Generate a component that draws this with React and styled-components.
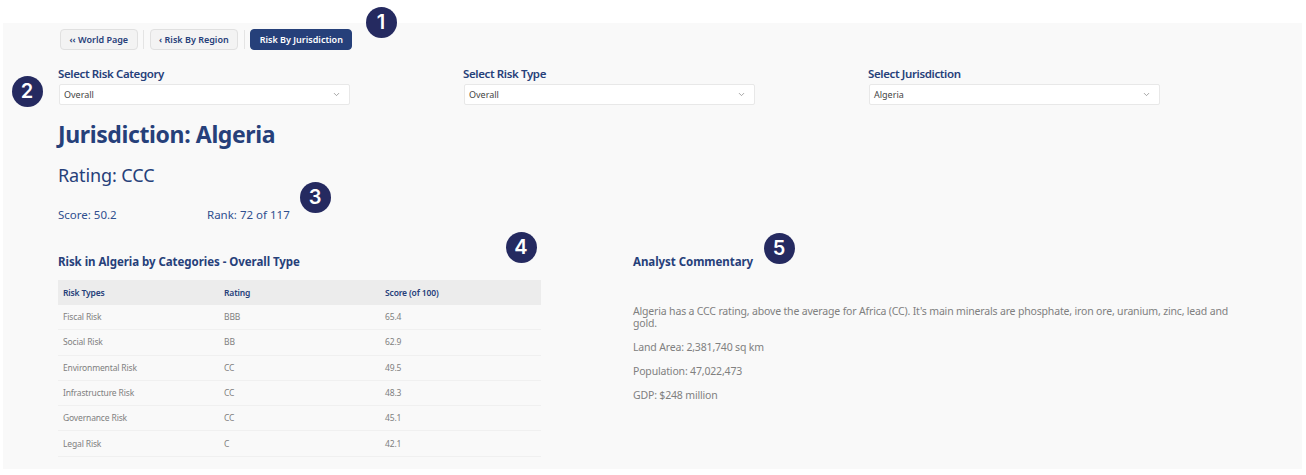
import React from 'react'
import styled, { createGlobalStyle } from 'styled-components'
import { ChevronDown } from 'lucide-react'

const navy = '#26407a'

const GlobalStyle = createGlobalStyle`
html, body {
  margin: 0;
  padding: 0;
  background: #fff;
  font-family: "Noto Sans", "Open Sans", sans-serif;
}
`
const Page = styled.div`
position: relative;
width: 1306px;
height: 475px;
overflow: hidden;
padding: 23px 4px 6px 3px;
box-sizing: border-box;
`
const Panel = styled.div`
height: 100%;
background: #f9f9f9;
padding: 6px 0 0 55px;
box-sizing: border-box;
`
const Nav = styled.div`
display: flex;
align-items: center;
padding-left: 2px;
height: 21px;
`
const NavButton = styled.div`
height: 21px;
box-sizing: border-box;
padding: 0 8.5px;
display: flex;
align-items: center;
border-radius: 4px;
font-size: 9px;
font-weight: 600;
color: ${props => props.$active ? '#fff' : navy};
background: ${props => props.$active ? navy : '#f3f3f3'};
border: 1px solid ${props => props.$active ? navy : '#e0e0e0'};
`
const Divider = styled.div`
width: 1px;
height: 19px;
margin: 0 5.5px;
background: #e4e4e4;
`
const Filters = styled.div`
display: grid;
grid-template-columns: repeat(3, 405px);
margin-top: 16px;
`
const FilterLabel = styled.div`
font-size: 11.5px;
font-weight: 600;
line-height: 16px;
letter-spacing: -0.38px;
color: ${navy};
`
const Select = styled.div`
width: 291px;
height: 21px;
margin: 2px 0 0 1px;
box-sizing: border-box;
padding: 0 8px 0 4px;
display: flex;
align-items: center;
justify-content: space-between;
background: #fff;
border: 1px solid #e8e8e8;
border-radius: 2px;
font-size: 9px;
color: #444;
svg {
  color: #888;
}
`
const Title = styled.h1`
margin: 15px 0 0;
font-size: 23px;
line-height: 28px;
font-weight: 700;
letter-spacing: -0.38px;
color: ${navy};
`
const Rating = styled.h2`
margin: 15px 0 0;
font-size: 18px;
line-height: 24px;
font-weight: 400;
letter-spacing: -0.1px;
color: ${navy};
`
const Stats = styled.div`
display: flex;
margin-top: 20px;
font-size: 11.5px;
line-height: 16px;
color: #2f4f8f;
`
const Stat = styled.div`
width: 149px;
`
const Columns = styled.div`
display: flex;
margin-top: 31px;
`
const TableSection = styled.section`
width: 483px;
margin-right: 92px;
`
const CommentarySection = styled.section`
width: 600px;
`
const SectionTitle = styled.h3`
margin: 0;
font-size: 11.5px;
line-height: 16px;
font-weight: 700;
letter-spacing: -0.05px;
color: ${navy};
`
const Table = styled.table`
width: 483px;
margin-top: 10px;
border-collapse: collapse;
table-layout: fixed;
font-size: 8.5px;
letter-spacing: -0.15px;
`
const Th = styled.th`
height: 25px;
padding: 0 5px;
text-align: left;
font-weight: 600;
color: ${navy};
background: #ececec;
`
const Td = styled.td`
height: 23.3px;
padding: 0 5px 1px;
color: #808080;
border-bottom: 1px solid #f0f0f0;
`
const Commentary = styled.div`
margin-top: 35px;
font-size: 10.5px;
line-height: 12px;
letter-spacing: -0.17px;
color: #808080;
p {
  margin: 0 0 12px;
}
`
const Badge = styled.div`
position: absolute;
left: ${props => props.$x - 15.5}px;
top: ${props => props.$y - 15.5}px;
width: 31px;
height: 31px;
border-radius: 50%;
background: #252a60;
color: #fff;
display: flex;
align-items: center;
justify-content: center;
font-family: Inter, sans-serif;
font-size: 20px;
font-weight: 600;
`

const filters = [
  ['Select Risk Category', 'Overall'],
  ['Select Risk Type', 'Overall'],
  ['Select Jurisdiction', 'Algeria'],
]

const rows = [
  ['Fiscal Risk', 'BBB', '65.4'],
  ['Social Risk', 'BB', '62.9'],
  ['Environmental Risk', 'CC', '49.5'],
  ['Infrastructure Risk', 'CC', '48.3'],
  ['Governance Risk', 'CC', '45.1'],
  ['Legal Risk', 'C', '42.1'],
]

const badges = [
  [1, 381, 22],
  [2, 27, 91],
  [3, 315, 197],
  [4, 521, 247],
  [5, 779, 248],
]

const App = () => {
  return (
    <Page>
      <GlobalStyle />
      <Panel>
        <Nav>
          <NavButton>‹‹ World Page</NavButton>
          <Divider />
          <NavButton>‹ Risk By Region</NavButton>
          <Divider />
          <NavButton $active>Risk By Jurisdiction</NavButton>
        </Nav>
        <Filters>
          {filters.map(([label, value]) => (
            <div key={label}>
              <FilterLabel>{label}</FilterLabel>
              <Select>
                {value}
                <ChevronDown size={9} />
              </Select>
            </div>
          ))}
        </Filters>
        <Title>Jurisdiction: Algeria</Title>
        <Rating>Rating: CCC</Rating>
        <Stats>
          <Stat>Score: 50.2</Stat>
          <Stat>Rank: 72 of 117</Stat>
        </Stats>
        <Columns>
          <TableSection>
            <SectionTitle>Risk in Algeria by Categories - Overall Type</SectionTitle>
            <Table>
              <thead>
                <tr>
                  <Th>Risk Types</Th>
                  <Th>Rating</Th>
                  <Th>Score (of 100)</Th>
                </tr>
              </thead>
              <tbody>
                {rows.map(row => (
                  <tr key={row[0]}>
                    {row.map(cell => <Td key={cell}>{cell}</Td>)}
                  </tr>
                ))}
              </tbody>
            </Table>
          </TableSection>
          <CommentarySection>
            <SectionTitle>Analyst Commentary</SectionTitle>
            <Commentary>
              <p>Algeria has a CCC rating, above the average for Africa (CC). It's main minerals are phosphate, iron ore, uranium, zinc, lead and gold.</p>
              <p>Land Area: 2,381,740 sq km</p>
              <p>Population: 47,022,473</p>
              <p>GDP: $248 million</p>
            </Commentary>
          </CommentarySection>
        </Columns>
      </Panel>
      {badges.map(([n, x, y]) => <Badge key={n} $x={x} $y={y}>{n}</Badge>)}
    </Page>
  )
}

export default App
